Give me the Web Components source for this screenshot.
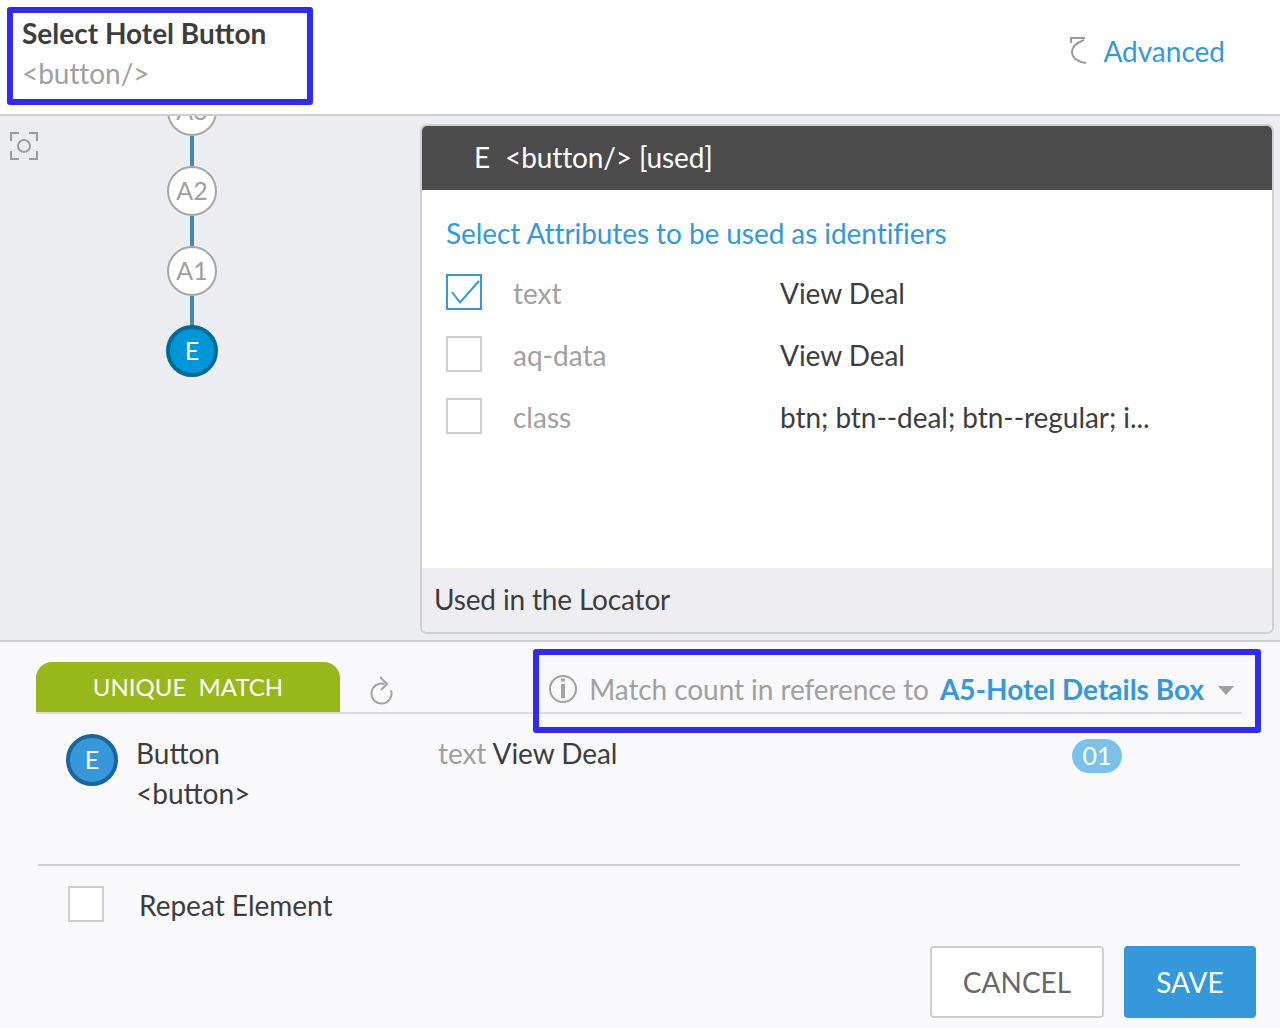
<!DOCTYPE html>
<html lang="en">
<head>
<meta charset="utf-8">
<title>Select Hotel Button</title>
<style>
  html, body { margin: 0; height: 100%; }
  body {
    font-family: Lato, "Open Sans", sans-serif;
    color: #3d3d3d;
    width: 1280px;
    height: 1028px;
    overflow: hidden;
    display: flex;
    flex-direction: column;
  }
</style>
</head>
<body>
<element-header title-text="Select Hotel Button" tag-text="&lt;button/&gt;"></element-header>
<main-area></main-area>
<match-footer></match-footer>

<script>
class HighlightBox extends HTMLElement {
  constructor() {
    super();
    this.attachShadow({ mode: "open" }).innerHTML = `
      <style>
        :host {
          display: block;
          position: absolute;
          box-sizing: border-box;
          border: 6px solid #2f2cf0;
          border-radius: 3px;
          pointer-events: none;
        }
      </style>`;
  }
}

class ElementHeader extends HTMLElement {
  connectedCallback() {
    this.attachShadow({ mode: "open" }).innerHTML = `
      <style>
        :host {
          display: flex;
          position: relative;
          height: 116px;
          box-sizing: border-box;
          flex: none;
          background: #fff;
          border-bottom: 2px solid #cfcfcf;
          justify-content: space-between;
        }
        .name { padding: 16px 0 0 22px; }
        h1 { margin: 0; font-size: 28px; line-height: 34px; font-weight: 700; color: #3d3d3d; }
        p { margin: 6px 0 0; font-size: 28px; line-height: 34px; color: #a0a0a0; letter-spacing: -0.05px; }
        .adv { display: flex; align-items: center; gap: 15px; padding: 0 55px 12px 0; color: #3498db; font-size: 28px; }
        svg { display: block; width: 18px; height: 28px; }
        highlight-box { left: 7px; top: 7px; width: 306px; height: 98px; }
      </style>
      <div class="name"><h1></h1><p></p></div>
      <div class="adv">
        <svg viewBox="0 0 18 28" fill="none" stroke="#9b9b9b" stroke-width="2">
          <path d="M0 1H15M1 1V6"/>
          <path d="M14 3C6 6 2 10 2 15C2 21 8 25 16 26"/>
        </svg>
        <span>Advanced</span>
      </div>
      <highlight-box></highlight-box>`;
    this.shadowRoot.querySelector("h1").textContent = this.getAttribute("title-text") || "";
    this.shadowRoot.querySelector("p").textContent = this.getAttribute("tag-text") || "";
  }
}

class TreeNode extends HTMLElement {
  connectedCallback() {
    const active = this.hasAttribute("active");
    this.attachShadow({ mode: "open" }).innerHTML = `
      <style>
        :host { display: flex; flex-direction: column; align-items: center; flex: none; }
        .dot {
          box-sizing: border-box;
          width: 50px; height: 50px;
          border-radius: 50%;
          border: 2px solid #a6a6a6;
          background: #fff;
          color: #a0a0a0;
          font-size: 25px;
          padding-bottom: 2px;
          display: flex; align-items: center; justify-content: center;
        }
        :host([active]) .dot {
          width: 52px; height: 52px;
          margin-top: -1px;
          border: 4px solid #006b99;
          background: #0097d8;
          color: #fff;
        }
        .line { width: 4px; height: 30px; background: #4a86b5; }
      </style>
      <div class="dot"><slot></slot></div>
      ${active ? "" : '<div class="line"></div>'}`;
  }
}

class TreeRail extends HTMLElement {
  constructor() {
    super();
    this.attachShadow({ mode: "open" }).innerHTML = `
      <style>
        :host {
          display: flex;
          width: 420px;
          flex: none;
          overflow: hidden;
          padding-left: 10px;
          box-sizing: border-box;
        }
        svg { display: block; width: 28px; height: 28px; margin-top: 16px; flex: none; }
        .track { display: flex; flex-direction: column; align-items: center; width: 52px; margin: -30px 0 0 128px; }
      </style>
      <svg viewBox="0 0 28 28" fill="none" stroke="#9b9b9b" stroke-width="2">
        <path d="M1 9V1H9M19 1H27V9M27 19V27H19M9 27H1V19"/>
        <circle cx="14" cy="14" r="6"/>
      </svg>
      <div class="track">
        <tree-node>A3</tree-node>
        <tree-node>A2</tree-node>
        <tree-node>A1</tree-node>
        <tree-node active>E</tree-node>
      </div>`;
  }
}

class CheckBox extends HTMLElement {
  connectedCallback() {
    const on = this.hasAttribute("checked");
    this.attachShadow({ mode: "open" }).innerHTML = `
      <style>
        :host {
          display: block;
          box-sizing: border-box;
          width: 36px; height: 36px;
          flex: none;
          border: 2px solid #cfcfcf;
          background: #fff;
        }
        :host([checked]) { border-color: #3498db; }
        svg { display: block; width: 32px; height: 32px; }
      </style>
      ${on ? `<svg viewBox="0 0 32 32" fill="none" stroke="#3498db" stroke-width="2"><path d="M4 16L12 26.500L31 5"/></svg>` : ""}`;
  }
}

class AttrRow extends HTMLElement {
  connectedCallback() {
    const name = this.getAttribute("name") || "";
    const checked = this.hasAttribute("checked") ? "checked" : "";
    this.attachShadow({ mode: "open" }).innerHTML = `
      <style>
        :host { display: flex; align-items: center; height: 62px; font-size: 28px; }
        span { padding-top: 2px; }
        .name { color: #a0a0a0; width: 267px; margin-left: 31px; flex: none; }
        .value { color: #3d3d3d; white-space: nowrap; letter-spacing: -0.05px; }
      </style>
      <check-box ${checked}></check-box>
      <span class="name">${name}</span>
      <span class="value"><slot></slot></span>`;
  }
}

class AttrPanel extends HTMLElement {
  constructor() {
    super();
    this.attachShadow({ mode: "open" }).innerHTML = `
      <style>
        :host {
          display: flex;
          flex-direction: column;
          width: 854px;
          box-sizing: border-box;
          flex: none;
          margin: 8px 0 6px;
          background: #fff;
          border: 2px solid #cfcfcf;
          border-radius: 7px;
          overflow: hidden;
        }
        header {
          height: 64px;
          box-sizing: border-box;
          flex: none;
          background: #4b4b4b;
          color: #fff;
          font-size: 28px;
          display: flex;
          align-items: center;
          padding: 0 0 2px 52px;
          gap: 15px;
          white-space: nowrap;
          letter-spacing: -0.12px;
        }
        .body { flex: 1; padding: 26px 24px 0; }
        h2 { margin: 0 0 11px; font-size: 28px; line-height: 34px; font-weight: 400; color: #3498db; letter-spacing: -0.07px; }
        footer {
          height: 64px;
          box-sizing: border-box;
          flex: none;
          background: #eeeef2;
          font-size: 28px;
          color: #3d3d3d;
          display: flex;
          align-items: center;
          padding: 0 0 2px 12px;
          letter-spacing: -0.16px;
        }
      </style>
      <header><span>E</span><span>&lt;button/&gt; [used]</span></header>
      <div class="body">
        <h2>Select Attributes to be used as identifiers</h2>
        <attr-row name="text" checked>View Deal</attr-row>
        <attr-row name="aq-data">View Deal</attr-row>
        <attr-row name="class">btn; btn--deal; btn--regular; i...</attr-row>
      </div>
      <footer>Used in the Locator</footer>`;
  }
}

class MainArea extends HTMLElement {
  constructor() {
    super();
    this.attachShadow({ mode: "open" }).innerHTML = `
      <style>
        :host {
          display: flex;
          height: 526px;
          flex: none;
          box-sizing: border-box;
          background: #ecedf1;
          border-bottom: 2px solid #cfcfcf;
        }
      </style>
      <tree-rail></tree-rail>
      <attr-panel></attr-panel>`;
  }
}

class MatchBar extends HTMLElement {
  constructor() {
    super();
    this.attachShadow({ mode: "open" }).innerHTML = `
      <style>
        :host {
          display: flex;
          position: relative;
          height: 52px;
          box-sizing: border-box;
          margin: 20px 38px 0 36px;
          border-bottom: 2px solid #dddddf;
        }
        .tab {
          width: 304px; height: 50px;
          background: #97b71b;
          border-radius: 16px 16px 0 0;
          color: #fff;
          font-size: 24px;
          padding-bottom: 1px;
          box-sizing: border-box;
          white-space: pre;
          display: flex; align-items: center; justify-content: center;
        }
        .reload { display: block; width: 24px; height: 32px; margin: 14px 0 0 30px; flex: none; }
        .count { display: flex; align-items: center; margin: 0 0 0 auto; padding: 4px 8px 0 0; box-sizing: border-box; height: 50px; font-size: 28px; color: #a0a0a0; white-space: nowrap; }
        .info { display: block; width: 28px; height: 28px; margin-right: 12px; }
        .label { letter-spacing: -0.07px; }
        b { font-weight: 700; color: #3498db; margin-left: 11px; }
        .caret { width: 0; height: 0; margin: 3px 0 0 14px; border: 8px solid transparent; border-top: 9px solid #a0a0a0; border-bottom: 0; }
        highlight-box { left: 497px; top: -13px; width: 728px; height: 84px; }
      </style>
      <div class="tab">UNIQUE  MATCH</div>
      <svg class="reload" viewBox="0 0 24 32" fill="none" stroke="#a3a3a3" stroke-width="2">
        <path d="M14.500 8A10 10 0 1 0 21 14.400"/>
        <path d="M10 1L17 8L11 14"/>
      </svg>
      <div class="count">
        <svg class="info" viewBox="0 0 28 28" fill="none" stroke="#a3a3a3" stroke-width="2">
          <circle cx="14" cy="14" r="13"/>
          <path d="M14 9V23" stroke-width="4"/>
          <path d="M14 3.500V6.500" stroke-width="4"/>
        </svg>
        <span class="label">Match count in reference to</span>
        <b>A5-Hotel Details Box</b>
        <span class="caret"></span>
      </div>
      <highlight-box></highlight-box>`;
  }
}

class MatchRow extends HTMLElement {
  constructor() {
    super();
    this.attachShadow({ mode: "open" }).innerHTML = `
      <style>
        :host {
          display: flex;
          height: 152px;
          box-sizing: border-box;
          margin: 0 40px 0 38px;
          padding: 20px 0 0 28px;
          border-bottom: 2px solid #cfcfcf;
          font-size: 28px;
          line-height: 40px;
          color: #3d3d3d;
        }
        .badge {
          box-sizing: border-box;
          width: 52px; height: 52px;
          flex: none;
          border-radius: 50%;
          border: 4px solid #1c6598;
          background: #3498db;
          color: #fff;
          font-size: 25px;
          line-height: 42px;
          text-align: center;
        }
        .who { width: 302px; margin: -1px 0 0 18px; flex: none; white-space: nowrap; }
        .what { width: 634px; margin-top: -1px; flex: none; white-space: nowrap; letter-spacing: -0.05px; }
        .what span { color: #a0a0a0; }
        .pill {
          width: 50px; height: 34px;
          margin-top: 5px;
          border-radius: 17px;
          background: #7cc1ea;
          color: #fff;
          font-size: 25px;
          line-height: 33px;
          text-align: center;
        }
      </style>
      <div class="badge">E</div>
      <div class="who">Button<br>&lt;button&gt;</div>
      <div class="what"><span>text</span> View Deal</div>
      <div class="pill">01</div>`;
  }
}

class MatchFooter extends HTMLElement {
  constructor() {
    super();
    this.attachShadow({ mode: "open" }).innerHTML = `
      <style>
        :host {
          display: block;
          flex: 1;
          background: #f9f9fb;
        }
        .repeat { display: flex; align-items: center; gap: 35px; margin: 20px 0 0 68px; font-size: 28px; color: #3d3d3d; }
        .repeat span { padding-top: 2px; }
        .actions { display: flex; justify-content: flex-end; gap: 20px; margin: 24px 24px 0 0; }
        button {
          box-sizing: border-box;
          height: 72px;
          font: 400 28px Lato, sans-serif;
          border-radius: 4px;
          cursor: pointer;
        }
        .cancel { width: 174px; background: #fff; border: 2px solid #cfcfcf; color: #666; }
        .save { width: 132px; background: #3498db; border: 0; color: #fff; }
      </style>
      <match-bar></match-bar>
      <match-row></match-row>
      <div class="repeat"><check-box></check-box><span>Repeat Element</span></div>
      <div class="actions">
        <button class="cancel">CANCEL</button>
        <button class="save">SAVE</button>
      </div>`;
  }
}

customElements.define("highlight-box", HighlightBox);
customElements.define("element-header", ElementHeader);
customElements.define("tree-node", TreeNode);
customElements.define("tree-rail", TreeRail);
customElements.define("check-box", CheckBox);
customElements.define("attr-row", AttrRow);
customElements.define("attr-panel", AttrPanel);
customElements.define("main-area", MainArea);
customElements.define("match-bar", MatchBar);
customElements.define("match-row", MatchRow);
customElements.define("match-footer", MatchFooter);
</script>
</body>
</html>
